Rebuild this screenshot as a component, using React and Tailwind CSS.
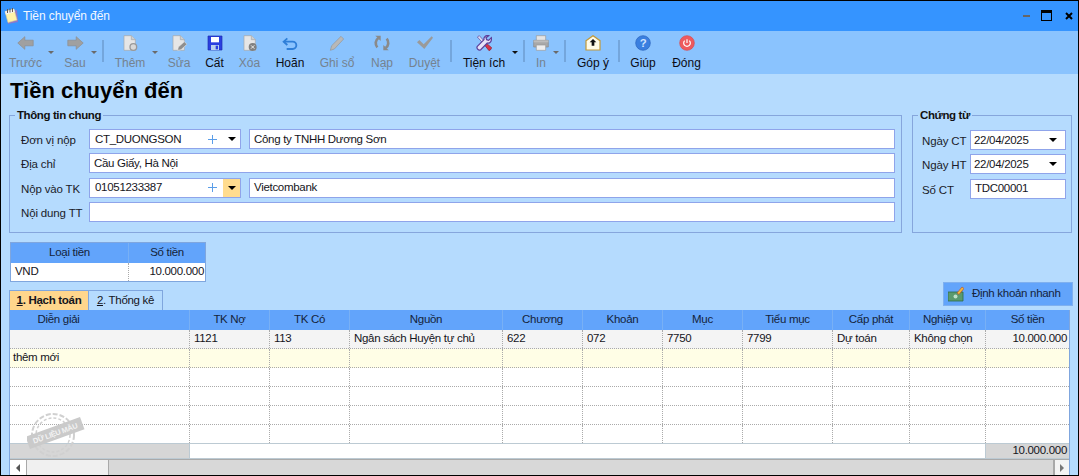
import React from "react";

const G = "#a0a0a0";
const Ic = ({ children, ...p }) => (
  <svg width="16" height="16" viewBox="0 0 24 24" {...p}>{children}</svg>
);
const Page = ({ children }) => (
  <Ic>
    <path d="M3 1h11l6 6v16H3z" fill="#e6e6e6" stroke="#a8a8a8" />
    <path d="M14 1v6h6" fill="#cfcfcf" stroke="#a8a8a8" />
    {children}
  </Ic>
);
const icons = {
  left: (
    <svg width="17" height="14" viewBox="0 0 24 20"><path d="M1 10 11 1v5h12v8H11v5z" fill={G} stroke="#8e8e8e" /></svg>
  ),
  right: (
    <svg width="17" height="14" viewBox="0 0 24 20"><path d="M23 10 13 1v5H1v8h12v5z" fill={G} stroke="#8e8e8e" /></svg>
  ),
  add: <Page><circle cx="17" cy="18" r="5" fill="#d8d8d8" stroke="#999" strokeWidth="2" /></Page>,
  edit: <Page><path d="M10 23l1-5 9-8 4 4-9 8z" fill="#8f8f8f" stroke="#eee" strokeWidth=".8" /></Page>,
  save: (
    <Ic>
      <path d="M1.500 1.500h21v21h-21z" fill="#2a3fe0" stroke="#1b2ab0" />
      <path d="M6 3h12v8H6z" fill="#fff" />
      <path d="M6 15h12v7.500H6z" fill="#b9d0ee" />
      <path d="M13 16h3.500v5.500H13z" fill="#2a3fe0" />
    </Ic>
  ),
  del: <Page><circle cx="16" cy="18" r="6" fill="#808080" /><path d="m13.500 15.500 5 5m0-5-5 5" stroke="#eee" strokeWidth="1.500" /></Page>,
  undo: (
    <Ic fill="none" stroke="#2f7fd8" strokeWidth="2.800">
      <path d="M8 5 2.500 10 8 15" />
      <path d="M3 10h13a5.500 5.500 0 0 1 0 11H7" />
    </Ic>
  ),
  pencil: (
    <Ic><path d="M2 23l2-7L18 2l4 4L8 21z" fill="#b8b8b8" stroke="#969696" /></Ic>
  ),
  reload: (
    <Ic fill="none" stroke="#8a8a8a" strokeWidth="4">
      <path d="M5 18.500a9.500 9.500 0 0 1 1.500-14" />
      <path d="M19 5.500a9.500 9.500 0 0 1-1.500 14" />
      <path d="M2 1h8v8z" fill="#8a8a8a" strokeWidth="0" />
      <path d="M22 23h-8v-8z" fill="#8a8a8a" strokeWidth="0" />
    </Ic>
  ),
  check: (
    <Ic><path d="M0 11l3.500-3.500L10 14 22 2l2 2-13 17z" fill="#9a9a9a" /></Ic>
  ),
  tools: (
    <Ic>
      <path d="M2 3l3-2 9 10-2.500 2.500z" fill="#dcdcf2" stroke="#5c3f9a" />
      <path d="m12 14 2.500-2.500 9 7.500-1.500 3-2.500 1.500z" fill="#d9344a" stroke="#8c1d2d" />
      <path d="M23 4l-4 4-3-1-1-3 4-3c-4-1-8 2-7 6L2 17c-2 3 2 7 5 5l10-10c4 1 7-3 6-8z" fill="#e6e2f8" stroke="#5c3f9a" strokeWidth="1.800" />
    </Ic>
  ),
  print: (
    <Ic>
      <path d="M5 1h14v8H5z" fill="#e4e4e4" stroke="#999" />
      <path d="M1 8h22v10H1z" fill="#a8a8a8" stroke="#8a8a8a" />
      <path d="M1 8h22v3H1z" fill="#bcbcbc" />
      <path d="M5 15h14v8H5z" fill="#eee" stroke="#999" />
    </Ic>
  ),
  mail: (
    <Ic>
      <path d="M1.500 8.500 12 1l10.500 7.500v14h-21z" fill="#fffbe8" stroke="#c29a3a" strokeWidth="1.800" />
      <path d="M12 6l5 5h-3v5h-4v-5H7z" fill="#111" />
    </Ic>
  ),
  help: (
    <Ic>
      <circle cx="12" cy="12" r="11" fill="#3a7fe0" stroke="#2a62bb" />
      <text x="12" y="18" textAnchor="middle" fontSize="17" fontWeight="700" fill="#cfe3ff" fontFamily="Liberation Sans">?</text>
    </Ic>
  ),
  power: (
    <Ic>
      <circle cx="12" cy="12" r="11" fill="#ee5a5e" stroke="#d94a4e" />
      <path d="M8.500 8.500a5 5 0 1 0 7 0M12 6.500v5.500" fill="none" stroke="#fff" strokeWidth="1.800" />
    </Ic>
  ),
};

const tools = [
  { t: "item", l: "Trước", i: "left", w: 45, off: 1 },
  { t: "caret", off: 1 },
  { t: "item", l: "Sau", i: "right", w: 32, m: 5, off: 1 },
  { t: "caret", off: 1 },
  { t: "sep", m: 5 },
  { t: "item", l: "Thêm", i: "add", w: 44, m: 4, off: 1 },
  { t: "caret", off: 1 },
  { t: "item", l: "Sửa", i: "edit", w: 40, m: 1, off: 1 },
  { t: "item", l: "Cất", i: "save", w: 31 },
  { t: "item", l: "Xóa", i: "del", w: 39, off: 1 },
  { t: "item", l: "Hoãn", i: "undo", w: 42 },
  { t: "item", l: "Ghi sổ", i: "pencil", w: 52, off: 1 },
  { t: "item", l: "Nạp", i: "reload", w: 38, off: 1 },
  { t: "item", l: "Duyệt", i: "check", w: 47, off: 1 },
  { t: "sep", m: 2 },
  { t: "item", l: "Tiện ích", i: "tools", w: 56, m: 4 },
  { t: "caret" },
  { t: "sep", m: 5 },
  { t: "item", l: "In", i: "print", w: 24, m: 4, off: 1 },
  { t: "caret", off: 1 },
  { t: "sep", m: 5 },
  { t: "item", l: "Góp ý", i: "mail", w: 50, m: 2 },
  { t: "sep", m: 0 },
  { t: "item", l: "Giúp", i: "help", w: 46 },
  { t: "item", l: "Đóng", i: "power", w: 41 },
];

function Toolbar() {
  return (
    <div className="flex h-[43px] shrink-0 items-start bg-[#8ac3fe] pl-[2px]">
      {tools.map((x, i) => {
        const ml = { marginLeft: x.m || 0 };
        if (x.t === "sep") return <div key={i} style={ml} className="mt-[9px] h-[22px] w-[2px] shrink-0 bg-[#74a6dc]" />;
        if (x.t === "caret")
          return (
            <div key={i} className="mt-[20px] h-0 w-0 shrink-0 border-x-[3px] border-t-[3px] border-x-transparent" style={{ borderTopColor: x.off ? "#6a6a6a" : "#111" }} />
          );
        return (
          <div key={i} style={{ ...ml, width: x.w }} className="flex shrink-0 flex-col items-center">
            <div className="flex h-[24px] w-[24px] items-center justify-center">{icons[x.i]}</div>
            <div className={`mt-[1px] whitespace-nowrap text-[12px] leading-[15px] tracking-normal ${x.off ? "text-[#75828f]" : "text-[#0c0c14]"}`}>{x.l}</div>
          </div>
        );
      })}
    </div>
  );
}

const Input = ({ v, w, extra = "" }) => (
  <div className={`flex h-[20px] items-center border border-[#8fa4ea] bg-white pl-[4px] text-[#15151c] ${w || "flex-1"} ${extra}`}>{v}</div>
);

const Combo = ({ v, hot }) => (
  <div className="flex h-[20px] w-[152px] shrink-0 items-stretch border border-[#8fa4ea] bg-white text-[#15151c]">
    <div className="flex flex-1 items-center pl-[5px]">{v}</div>
    <div className="flex w-[17px] items-center justify-center pr-[3px]">
      <svg width="9" height="9" viewBox="0 0 9 9"><path d="M4.500 0v9M0 4.500h9" stroke="#5b9ee8" strokeWidth="1" /></svg>
    </div>
    <div className={`ml-[1px] flex w-[17px] items-center justify-center ${hot ? "bg-[#ffdc8e]" : ""}`}>
      <div className="h-0 w-0 border-x-[4px] border-t-[4px] border-x-transparent border-t-black" />
    </div>
  </div>
);

const Lab = ({ t, w }) => <div className={`shrink-0 pt-[3px] tracking-[-0.15px] text-[#1b1b2a] ${w}`}>{t}</div>;

function Form() {
  return (
    <div className="flex gap-[10px]">
      <fieldset className="h-[125px] w-[893px] border border-[#86a6dc] pl-[11px] pr-[6px]">
        <legend className="ml-[-6px] px-[2px] font-bold leading-[14px] tracking-[-0.4px] text-[#111]">Thông tin chung</legend>
        <div className="mt-[7px] flex flex-col gap-[4px]">
          <div className="flex items-center">
            <Lab t="Đơn vị nộp" w="w-[68px]" />
            <Combo v="CT_DUONGSON" />
            <Input v="Công ty TNHH Dương Sơn" extra="ml-[8px]" />
          </div>
          <div className="flex items-center">
            <Lab t="Địa chỉ" w="w-[68px]" />
            <Input v="Cầu Giấy, Hà Nội" />
          </div>
          <div className="flex items-center">
            <Lab t="Nộp vào TK" w="w-[68px]" />
            <Combo v="01051233387" hot />
            <Input v="Vietcombank" extra="ml-[8px]" />
          </div>
          <div className="flex items-center">
            <Lab t="Nội dung TT" w="w-[68px]" />
            <Input v="" />
          </div>
        </div>
      </fieldset>
      <fieldset className="h-[125px] w-[160px] border border-[#86a6dc] pl-[9px]">
        <legend className="ml-[-4px] px-[2px] font-bold leading-[14px] tracking-[-0.4px] text-[#111]">Chứng từ</legend>
        <div className="mt-[8px] flex flex-col gap-[4px]">
          {["Ngày CT", "Ngày HT"].map((l) => (
            <div key={l} className="flex items-center">
              <Lab t={l} w="w-[48px]" />
              <div className="flex h-[20px] w-[96px] items-center justify-between border border-[#8fa4ea] bg-white pl-[3px] pr-[8px] text-[#15151c]">
                22/04/2025
                <div className="h-0 w-0 border-x-[4px] border-t-[4px] border-x-transparent border-t-black" />
              </div>
            </div>
          ))}
          <div className="flex items-center">
            <Lab t="Số CT" w="w-[48px]" />
            <Input v="TDC00001" w="w-[96px]" />
          </div>
        </div>
      </fieldset>
    </div>
  );
}

const cols = "grid grid-cols-[180px_80px_80px_153px_80px_80px_80px_90px_77px_76px_83px]";
const heads = ["Diễn giải", "TK Nợ", "TK Có", "Nguồn", "Chương", "Khoản", "Mục", "Tiểu mục", "Cấp phát", "Nghiệp vụ", "Số tiền"];
const row1 = ["", "1121", "113", "Ngân sách Huyện tự chủ", "622", "072", "7750", "7799", "Dự toán", "Không chọn", "10.000.000"];

function Row({ vals, bg, h }) {
  return (
    <div className={`${cols} ${bg} border-b border-dotted border-[#aaaaaa]`} style={{ height: h }}>
      {vals.map((v, i) => (
        <div
          key={i}
          className={`flex items-center overflow-hidden whitespace-nowrap text-[#15151c] ${i === 0 ? "pl-[3px]" : "pl-[4px]"} ${i < 10 ? "border-r border-dotted border-[#aaaaaa]" : "justify-end pr-[2px]"}`}
        >
          {v}
        </div>
      ))}
    </div>
  );
}

function Stamp() {
  return (
    <svg className="absolute left-[17px] top-[101px]" width="58" height="48" viewBox="0 0 58 48">
      <g fill="none" stroke="#d0d0d0">
        <circle cx="26" cy="24" r="21" strokeWidth="2" strokeDasharray="5 2" />
        <circle cx="26" cy="24" r="17" strokeWidth="1.500" strokeDasharray="3 2" />
      </g>
      <g transform="rotate(-20 28 22)">
        <rect x="-1" y="15.500" width="58" height="13" fill="#cacaca" />
        <text x="28" y="25" textAnchor="middle" fontSize="7.500" fontWeight="700" fill="#f2f2f2" fontFamily="Liberation Sans">DỮ LIỆU MẪU</text>
      </g>
    </svg>
  );
}

function Grid() {
  const empty = heads.map(() => "");
  return (
    <div className="relative w-[1061px] border-l border-r border-[#7fa6de]">
      <div className={`${cols} h-[20px] bg-[#62a4fb]`}>
        {heads.map((h, i) => (
          <div key={h} className={`flex items-center justify-center text-[#14233a] ${i < 10 ? "border-r border-[#78b0f5]" : ""} ${i === 0 ? "pr-[82px]" : ""}`}>
            {h}
          </div>
        ))}
      </div>
      <Row vals={row1} bg="bg-[#f4f4f4]" h={19} />
      <Row vals={["thêm mới", ...empty.slice(1)]} bg="bg-[#fffee6]" h={19} />
      <Row vals={empty} bg="bg-white" h={19} />
      <Row vals={empty} bg="bg-white" h={19} />
      <Row vals={empty} bg="bg-white" h={19} />
      <div className={`${cols} h-[18px] bg-white`}>
        {empty.map((_, i) => (
          <div key={i} className={i < 10 ? "border-r border-dotted border-[#aaaaaa]" : ""} />
        ))}
      </div>
      <div className="flex h-[16px] border-y border-[#bccad3] bg-white">
        <div className="w-[180px] border-r border-[#bccad3] bg-[#d6d6d6]" />
        <div className="flex-1" />
        <div className="flex w-[84px] items-center justify-end border-l border-[#bccad3] bg-[#d6d6d6] pr-[2px] text-[#15151c]">10.000.000</div>
      </div>
      <div className="flex h-[16px] border-t border-[#a9a9a9] bg-[#d8d8d8]">
        <div className="flex w-[17px] items-center justify-center border-r border-[#a9a9a9] bg-white">
          <div className="h-0 w-0 border-y-[4px] border-r-[4px] border-y-transparent border-r-[#555]" />
        </div>
        <div className="w-[82px] border-r border-[#a9a9a9] bg-[#f0f0f0]" />
        <div className="flex-1" />
        <div className="flex w-[16px] items-center justify-center border-l-2 border-[#a9a9a9] bg-[#f4f4f4]">
          <div className="h-0 w-0 border-y-[4px] border-l-[4px] border-y-transparent border-l-[#777]" />
        </div>
      </div>
      <Stamp />
    </div>
  );
}

export default function App() {
  return (
    <div className="flex h-[476px] w-[1079px] flex-col overflow-hidden border border-black bg-[#b5dbfe] font-['Liberation_Sans',Arial,sans-serif] text-[11.5px] tracking-[-0.3px]">
      <div className="flex h-[30px] shrink-0 items-center bg-[#3594ff] pl-[3px]">
        <svg width="14" height="16" viewBox="0 0 14 16">
          <path d="M3 4 13 2l1 12-10 2z" fill="#8e78c9" />
          <path d="M1 3.500 10 1l3 11-9 2.500z" fill="#fff3a8" stroke="#d9cf9a" strokeWidth=".6" />
          <path d="M1 3.500 10 1l.8 3-9 2.500z" fill="#f4f4f4" />
          <path d="M3.500 1v4M6 .5v4M8.500 0v4" stroke="#6a5a4a" strokeWidth="1" />
        </svg>
        <span className="ml-[5px] text-[12px] tracking-[-0.1px] text-[#f2f8ff]">Tiền chuyển đến</span>
        <div className="mb-[1px] ml-auto mr-[5px] flex items-center">
          <div className="h-[2px] w-[7px] bg-[#666]" />
          <div className="ml-[11px] h-[11px] w-[11px] border border-t-[3px] border-black" />
          <svg className="ml-[13px]" width="8" height="8" viewBox="0 0 8 8"><path d="M1 1l6 6M7 1 1 7" stroke="#000" strokeWidth="2" /></svg>
        </div>
      </div>
      <Toolbar />
      <div className="flex min-h-0 flex-1 flex-col pl-[8px] pr-[5px]">
        <div className="ml-[1px] h-[34px] shrink-0 pt-[4px] text-[22px] font-bold leading-[26px] tracking-normal text-black">Tiền chuyển đến</div>
        <Form />
        <div className="ml-[1px] mt-[9px] w-[196px] border border-[#7fa6de] bg-white">
          <div className="grid h-[20px] grid-cols-[118px_76px] bg-[#62a4fb] text-[#14233a]">
            <div className="flex items-center justify-center border-r border-[#78b0f5]">Loại tiền</div>
            <div className="flex items-center justify-center">Số tiền</div>
          </div>
          <div className="grid h-[18px] grid-cols-[118px_76px] text-[#15151c]">
            <div className="flex items-center border-r border-dotted border-[#aaaaaa] pl-[4px]">VND</div>
            <div className="flex items-center justify-end pr-[1px]">10.000.000</div>
          </div>
        </div>
        <div className="flex h-[28px] shrink-0 items-end justify-between">
          <div className="flex h-[20px] items-stretch border-t border-l border-[#7fa6de]">
            <div className="flex w-[78px] items-center justify-center bg-[#ffd68c] font-bold text-[#15151c]"><span><u>1</u>. Hạch toán</span></div>
            <div className="flex w-[75px] items-center justify-center border-x border-[#7fa6de] bg-[#b5dbfe] text-[#15151c]"><span><u>2</u>. Thống kê</span></div>
          </div>
          <div className="mb-[4px] flex h-[24px] w-[130px] items-center border border-[#7fb0ef] bg-[#62a4fb] pl-[4px] text-[#14233a]">
            <svg width="16" height="16" viewBox="0 0 16 16" className="mr-[8px]">
              <path d="M0 6h15v9H0z" fill="#5a9a6e" stroke="#2f6d47" strokeWidth=".8" />
              <circle cx="7.500" cy="10.500" r="2" fill="#bfe0c8" />
              <path d="M9 7l5-6 2 1.500-5 6z" fill="#f0b93c" stroke="#b5452a" strokeWidth=".6" />
            </svg>
            Định khoản nhanh
          </div>
        </div>
        <Grid />
      </div>
    </div>
  );
}
